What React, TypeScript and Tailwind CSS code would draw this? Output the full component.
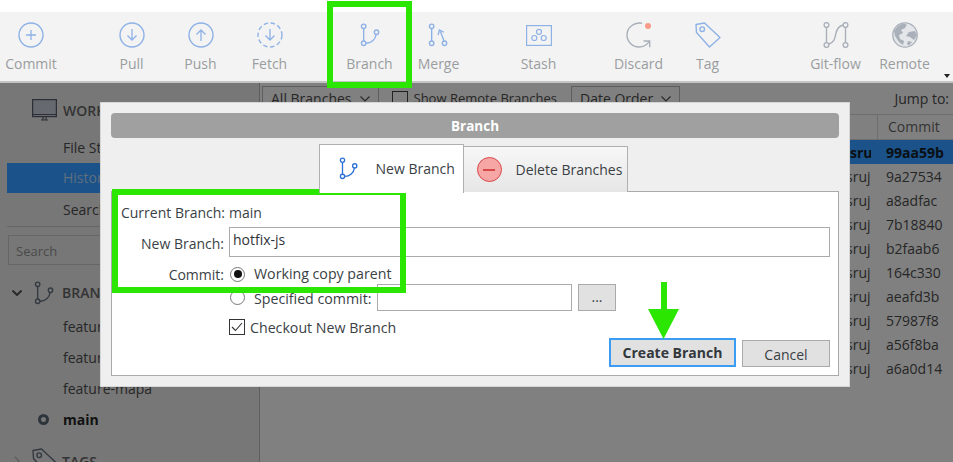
import React from "react";

const BranchGlyph = ({ color, width = 1.5, className }: { color: string; width?: number; className?: string }) => (
  <svg viewBox="0 0 24 26" className={className} fill="none" stroke={color} strokeWidth={width}>
    <circle cx="4" cy="3.5" r="2.4" />
    <circle cx="4" cy="22" r="2.4" />
    <circle cx="18" cy="10" r="2.4" />
    <path d="M4 6v13.5M6.4 22c6 0 10.5-4 11.2-9.6" />
  </svg>
);

const CircleArrow = ({ d, dashed }: { d: string; dashed?: boolean }) => (
  <svg viewBox="0 0 26 26" className="w-[26px] h-[26px]" fill="none" stroke="#8fb2e6" strokeWidth="1.4">
    <circle cx="13" cy="13" r="12" strokeDasharray={dashed ? "4.5 2.6" : undefined} />
    <path d={d} strokeWidth="1.3" />
  </svg>
);

const MergeGlyph = () => (
  <svg viewBox="0 0 24 26" className="w-[22px] h-[26px]" fill="none" stroke="#8fb2e6" strokeWidth="1.5">
    <circle cx="4" cy="3.5" r="2.4" />
    <circle cx="4" cy="22" r="2.4" />
    <circle cx="18" cy="22" r="2.4" />
    <path d="M4 6v13.5M17.5 19.5 13.5 9" />
    <path d="M11 13l1.5-5.5 5 2.5" />
  </svg>
);

const StashGlyph = () => (
  <svg viewBox="0 0 26 21" className="w-[26px] h-[21px]" fill="none" stroke="#8fb2e6" strokeWidth="1.2">
    <rect x="0.6" y="0.6" width="24.8" height="19.8" />
    <circle cx="13" cy="6.8" r="2.5" />
    <circle cx="8.3" cy="13" r="2.5" />
    <circle cx="17.7" cy="13" r="2.5" />
  </svg>
);

const DiscardGlyph = () => (
  <svg viewBox="0 0 26 26" className="w-[26px] h-[26px]" fill="none" stroke="#a9b0b9" strokeWidth="1.4">
    <path d="M16 1.3C8 -.2 1 5.6 1 13c0 6.6 5.4 12 12 12 4.8 0 8.3-2.3 10.5-6" />
    <path d="M17.5 19h6.2v6.2" />
    <circle cx="22" cy="4" r="3" fill="#f79a86" stroke="none" />
  </svg>
);

const TagPaths = () => (
  <>
    <path d="M1 2.5 9.5 1 25 15.5 14.5 25 1.5 10.5Z" strokeLinejoin="round" />
    <circle cx="7.2" cy="7.2" r="2.3" />
  </>
);

const TagGlyph = () => (
  <svg viewBox="0 0 26 26" className="w-[26px] h-[26px]" fill="none" stroke="#8fb2e6" strokeWidth="1.4">
    <TagPaths />
  </svg>
);

const GitFlowGlyph = () => (
  <svg viewBox="0 0 26 26" className="w-[26px] h-[26px]" fill="none" stroke="#a9b0b9" strokeWidth="1.4">
    <circle cx="3.5" cy="3" r="2.4" />
    <circle cx="3.5" cy="23" r="2.4" />
    <circle cx="22.5" cy="3" r="2.4" />
    <circle cx="22.5" cy="23" r="2.4" />
    <path d="M3.5 5.4v15.2M22.5 5.4v15.2M6 22c6-2 6-7 7-11 1-4 3-7 7-8" />
  </svg>
);

const RemoteGlyph = () => (
  <svg viewBox="0 0 26 26" className="w-[26px] h-[26px]">
    <circle cx="13" cy="13" r="12.2" fill="#e4e6e9" stroke="#a9b0b9" strokeWidth="1.3" />
    <path d="M10 1.5 15 2.5 13 6 9 8 11 11 7 13 8 17 12 19 11 23 7 20 3 14 2 9 5 5Z" fill="#a9b0b9" />
    <path d="M17 10 23 9 25 13 22 18 18 15 14 14Z" fill="#a9b0b9" />
    <path d="M16 19 20 20 17 23.5 15 22Z" fill="#a9b0b9" />
  </svg>
);

const tools: { label: string; icon: React.ReactNode; className: string }[] = [
  { label: "Commit", className: "w-[62px]", icon: <CircleArrow d="M13 8v10M8 13h10" /> },
  { label: "Pull", className: "w-[69px] ml-[35px]", icon: <CircleArrow d="M13 7v11M8.5 13.5 13 18l4.5-4.5" /> },
  { label: "Push", className: "w-[69px]", icon: <CircleArrow d="M13 19V8M8.5 12.5 13 8l4.5 4.5" /> },
  { label: "Fetch", className: "w-[69px]", icon: <CircleArrow dashed d="M13 7v11M8.5 13.5 13 18l4.5-4.5" /> },
  {
    label: "Branch",
    className: "w-[69px] ml-[31px]",
    icon: <BranchGlyph color="#8fb2e6" className="w-[22px] h-[26px] ml-[3px]" />,
  },
  { label: "Merge", className: "w-[69px]", icon: <MergeGlyph /> },
  { label: "Stash", className: "w-[69px] ml-[31px]", icon: <StashGlyph /> },
  { label: "Discard", className: "w-[69px] ml-[31px]", icon: <DiscardGlyph /> },
  { label: "Tag", className: "w-[69px]", icon: <TagGlyph /> },
  { label: "Git-flow", className: "w-[69px] ml-[59px]", icon: <GitFlowGlyph /> },
  { label: "Remote", className: "w-[69px]", icon: <RemoteGlyph /> },
];

const commits = ["99aa59b", "9a27534", "a8adfac", "7b18840", "b2faab6", "164c330", "aeafd3b", "57987f8", "a56f8ba", "a6a0d14"];

const Chevron = ({ bold }: { bold?: boolean }) => (
  <svg viewBox="0 0 10 6" className="w-[10px] h-[6px]" fill="none" stroke="#2a2a2a" strokeWidth={bold ? 2 : 1.2}>
    <path d="M.5.5 5 5 9.5.5" />
  </svg>
);

export default function App() {
  return (
    <div
      className="relative w-[953px] h-[462px] overflow-hidden bg-white text-[14px] text-[#3a3f45]"
      style={{ fontFamily: '"Open Sans", "Noto Sans", sans-serif' }}
    >
      <div className="h-[12px] bg-white" />
      {/* Toolbar */}
      <div className="relative flex h-[71px] bg-[#f3f3f3] border-b-2 border-[#c4c4c4] pt-[10px]">
        {tools.map((t) => (
          <div key={t.label} className={`flex flex-col items-center shrink-0 ${t.className}`}>
            <div className="h-[26px] flex items-center justify-center">{t.icon}</div>
            <span className="mt-[6px] text-[14px] leading-[20px] text-[#9a9d9f] whitespace-nowrap">{t.label}</span>
          </div>
        ))}
        <div className="absolute right-[3px] bottom-[3px] w-0 h-0 border-x-[3px] border-x-transparent border-t-[4px] border-t-[#222]" />
      </div>

      {/* Dimmed main */}
      <div className="flex h-[379px]">
        <aside className="w-[260px] shrink-0 bg-[#777777] border-r border-[#5e5e5e] overflow-hidden text-[#262626]">
          <div className="flex items-center h-[50px] pl-[32px] pt-[4px]">
            <svg viewBox="0 0 25 22" className="w-[25px] h-[22px]" fill="#666a70" stroke="#2c3036" strokeWidth="1.2">
              <rect x=".6" y=".6" width="23.8" height="17" />
              <path d="M.6 15.5h23.8M9 21h7M11 18v3M14 18v3" fill="none" />
            </svg>
            <span className="ml-[6px] font-semibold text-[#333]">WORKSPACE</span>
          </div>
          <div className="h-[30px] pl-[63px] leading-[30px]">File Status</div>
          <div className="h-[30px] ml-[7px] pl-[56px] leading-[30px] bg-[#1a5289] text-[#5f6f80]">History</div>
          <div className="h-[33px] pl-[63px] leading-[33px]">Search</div>
          <div className="mx-[7px] h-px bg-[#666]" />
          <div className="mt-[8px] ml-[8px] mr-[7px] h-[30px] border border-[#666] pl-[7px] leading-[30px] text-[13px] text-[#4a4a4a]">Search</div>
          <div className="flex items-center h-[27px] mt-[14px] pl-[12px]">
            <Chevron bold />
            <BranchGlyph color="#343a42" className="w-[22px] h-[26px] ml-[12px]" />
            <span className="ml-[6px] font-semibold text-[#333]">BRANCHES</span>
          </div>
          <div className="h-[31px] pl-[63px] leading-[31px] mt-[5px]">feature-login</div>
          <div className="h-[31px] pl-[63px] leading-[31px]">feature-lista</div>
          <div className="h-[31px] pl-[63px] leading-[31px]">feature-mapa</div>
          <div className="flex items-center h-[31px] pl-[38px]">
            <span className="w-[11px] h-[11px] rounded-full border-[3px] border-[#2e343c]" />
            <span className="ml-[14px] font-bold text-[#111]">main</span>
          </div>
          <div className="flex items-center h-[30px] pl-[14px] mt-[11px]">
            <svg viewBox="0 0 6 10" className="w-[6px] h-[10px]" fill="none" stroke="#5c5c5c" strokeWidth="1.3">
              <path d="M.7.7 5 5 .7 9.3" />
            </svg>
            <svg viewBox="0 0 26 26" className="w-[26px] h-[26px] ml-[12px]" fill="none" stroke="#343a42" strokeWidth="1.4">
              <TagPaths />
            </svg>
            <span className="ml-[4px] font-semibold text-[#333]">TAGS</span>
          </div>
        </aside>

        <section className="flex-1 bg-[#808080] text-[#262626] overflow-hidden">
          <div className="flex items-center h-[32px] pl-[2px] pr-[4px] border-b border-[#6e6e6e]">
            <div className="flex items-center gap-[8px] h-[26px] px-[8px] border border-[#5e5e5e]">All Branches <Chevron /></div>
            <span className="ml-[13px] w-[16px] h-[16px] border border-[#222]" />
            <span className="ml-[6px] whitespace-nowrap text-[13px]">Show Remote Branches</span>
            <div className="ml-[14px] flex items-center gap-[8px] h-[26px] px-[8px] border border-[#5e5e5e]">Date Order <Chevron /></div>
            <span className="ml-auto">Jump to:</span>
          </div>
          <div className="flex justify-end h-[25px] border-b border-[#6e6e6e]">
            <div className="w-[76px] border-l border-[#6e6e6e] pl-[10px] leading-[23px] text-[#333]">Commit</div>
          </div>
          <div>
            {commits.map((c, i) => (
              <div key={c} className={`flex justify-end h-[24px] leading-[26px] ${i === 0 ? "bg-[#1a5289] font-bold text-[#0b0f14]" : ""}`}>
                <span className="w-[25px] mr-[5px] shrink-0 overflow-hidden whitespace-nowrap">{i === 0 ? ":sruj" : "sruj"}</span>
                <span className="w-[77px] shrink-0 pl-[10px]">{c}</span>
              </div>
            ))}
          </div>
        </section>
      </div>

      {/* Dialog */}
      <div className="absolute left-[100px] top-[102px] w-[750px] h-[285px] bg-[#efefef] border border-[#d6d6d6] px-[10px] pt-[10px]">
        <div className="h-[25px] rounded-[4px] bg-[#a0a0a0] text-center text-white font-bold text-[13.5px] leading-[26px]">Branch</div>
        <div className="flex justify-center h-[48px] mt-[6px] relative z-10 ml-[-4px]">
          <div className="flex items-center w-[145px] h-[49px] bg-white border border-b-0 border-[#b0b0b0] pl-[19px] pb-[2px]">
            <BranchGlyph color="#2a6fd6" className="w-[21px] h-[25px]" />
            <span className="ml-[16px] text-[#3a3f45] whitespace-nowrap">New Branch</span>
          </div>
          <div className="flex items-center w-[164px] h-[46px] mt-[2px] bg-gradient-to-b from-[#f7f7f7] to-[#e6e6e6] border border-l-0 border-b-0 border-[#b0b0b0] pl-[13px]">
            <span className="flex items-center justify-center w-[25px] h-[25px] rounded-full bg-[#f7a6a6] border border-[#d84a4a]">
              <span className="w-[12px] h-[2px] bg-[#d84a4a]" />
            </span>
            <span className="ml-[14px] text-[#3a3f45] whitespace-nowrap">Delete Branches</span>
          </div>
        </div>
        <div className="relative h-[185px] -mt-px bg-white border border-[#aaaaaa] pt-[10px]">
          <div className="flex h-[20px] items-center">
            <span className="w-[113px] text-right whitespace-nowrap">Current Branch:</span>
            <span className="ml-[4px]">main</span>
          </div>
          <div className="flex items-start mt-[5px] h-[30px]">
            <span className="w-[112px] text-right leading-[33px]">New Branch:</span>
            <div className="ml-[5px] w-[601px] h-[30px] border border-[#aaaaaa] pl-[3px] text-[#2f3338] leading-[24px]">hotfix-js</div>
          </div>
          <div className="flex h-[20px] items-center mt-[7px]">
            <span className="w-[112px] text-right">Commit:</span>
            <span className="ml-[6px] flex items-center justify-center w-[15px] h-[15px] rounded-full border border-[#777]">
              <span className="w-[8px] h-[8px] rounded-full bg-[#111]" />
            </span>
            <span className="ml-[9px] whitespace-nowrap text-[14.2px]">Working copy parent</span>
          </div>
          <div className="flex items-center h-[27px] ml-[118px]">
            <span className="w-[15px] h-[15px] rounded-full border border-[#777]" />
            <span className="ml-[9px] pt-[2px] whitespace-nowrap text-[14.2px]">Specified commit:</span>
            <span className="ml-auto w-[195px] h-[27px] border border-[#aaaaaa] mr-[266px]" />
          </div>
          <div className="flex items-center h-[20px] mt-[6px] ml-[117px]">
            <span className="flex items-center justify-center w-[16px] h-[16px] border border-[#333]">
              <svg viewBox="0 0 12 10" className="w-[12px] h-[10px]" fill="none" stroke="#333" strokeWidth="1.1">
                <path d="M1 5l3.5 3.5L11 1" />
              </svg>
            </span>
            <span className="ml-[5px] pt-[2px] whitespace-nowrap text-[14.2px]">Checkout New Branch</span>
          </div>
          <div className="absolute left-[466px] top-[92px] w-[38px] h-[27px] bg-[#e1e1e1] border border-[#aaaaaa] text-center leading-[24px]">...</div>
          <div className="absolute right-[8px] bottom-[8px] flex items-end gap-[6px]">
            <div className="w-[127px] h-[29px] bg-[#e1e1e1] border-2 border-[#3b9cf4] text-center font-bold text-[#33373c] leading-[26px]">Create Branch</div>
            <div className="w-[88px] h-[27px] bg-[#e1e1e1] border border-[#aaaaaa] text-center leading-[28px]">Cancel</div>
          </div>
        </div>
      </div>

      {/* Annotations */}
      <div className="absolute left-[327px] top-[1px] w-[85px] h-[87px] border-[6px] border-[#2ae600]" />
      <div className="absolute left-[112px] top-[189px] w-[294px] h-[104px] border-[6px] border-[#2ae600]" />
      <svg className="absolute left-[648px] top-[282px] w-[32px] h-[58px]" viewBox="0 0 32 58">
        <path d="M13 0h6v27h12L15.5 57 0 27h13Z" fill="#2ae600" />
      </svg>
    </div>
  );
}
